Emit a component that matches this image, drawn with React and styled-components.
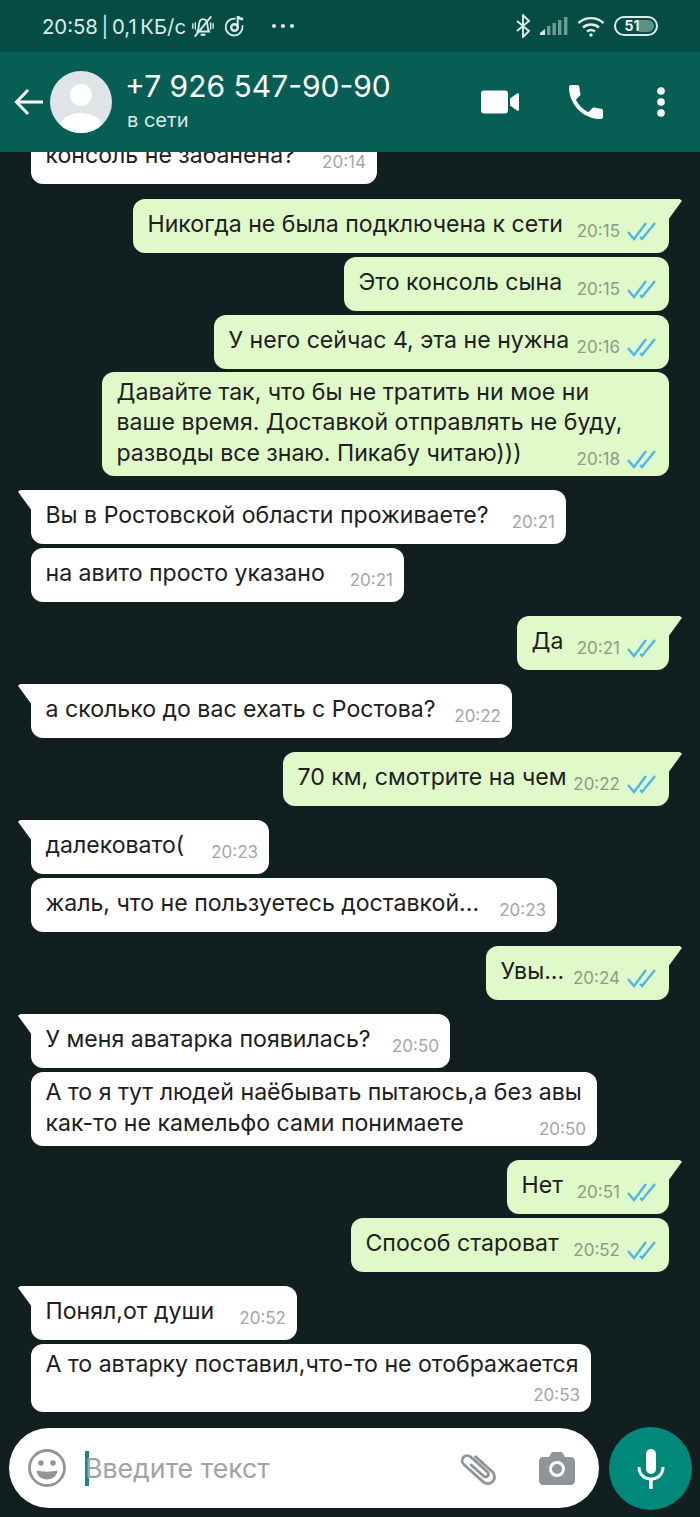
import React from "react";
import styled, { createGlobalStyle } from "styled-components";

const Global = createGlobalStyle`
  html, body { margin: 0; padding: 0; background: #111f20; }
  * { box-sizing: border-box; }
`;

const FONT = `Inter, Roboto, "Noto Sans", "Liberation Sans", sans-serif`;

const Phone = styled.div`
  width: 700px;
  height: 1517px;
  display: flex;
  flex-direction: column;
  overflow: hidden;
  background: #111f20;
  font-family: ${FONT};
`;

const StatusBar = styled.div`
  height: 52px;
  flex: none;
  background: #054d44;
  color: #dcebe7;
  display: flex;
  align-items: center;
  padding: 0 42px 0 42px;
  font-size: 20.3px;
`;
const StatusText = styled.span`
  white-space: nowrap;
  word-spacing: -2px;
`;
const StatusGap = styled.div`
  flex: 1;
`;
const StatusIcons = styled.div`
  display: flex;
  align-items: center;
  gap: ${(p) => p.$gap || 10}px;
  margin-left: ${(p) => p.$ml || 0}px;
`;
const BatteryBox = styled.div`
  width: 44px;
  height: 20px;
  border: 2px solid #dcebe7;
  border-radius: 10px;
  padding: 2px;
  display: flex;
`;
const BatteryFill = styled.div`
  width: 100%;
  border-radius: 7px;
  background: linear-gradient(90deg, transparent 0 58%, #5d8f86 58% 100%);
  color: #f2f7f5;
  font-size: 14px;
  font-weight: 700;
  line-height: 12px;
  text-align: center;
  padding-right: 8px;
`;

const Header = styled.div`
  height: 100px;
  flex: none;
  background: #075e54;
  color: #fff;
  display: flex;
  align-items: center;
  padding: 0 35px 0 14px;
`;
const Avatar = styled.div`
  width: 62px;
  height: 62px;
  margin-left: 7px;
  flex: none;
`;
const Contact = styled.div`
  margin-left: 15px;
  flex: 1;
  display: flex;
  flex-direction: column;
  margin-top: -4px;
`;
const ContactName = styled.div`
  font-size: 30px;
  line-height: 36px;
  white-space: nowrap;
  margin-left: -2px;
`;
const ContactState = styled.div`
  font-size: 20px;
  line-height: 26px;
  margin-top: 3px;
  color: #dbeae6;
`;
const HeaderActions = styled.div`
  display: flex;
  align-items: center;
`;

const Chat = styled.div`
  flex: 1;
  min-height: 0;
  overflow: hidden;
  display: flex;
  flex-direction: column;
  justify-content: flex-end;
  padding: 0 31px 15px;
`;

const Bubble = styled.div`
  position: relative;
  align-self: ${(p) => (p.$out ? "flex-end" : "flex-start")};
  flex: none;
  width: ${(p) => p.$w}px;
  margin-top: ${(p) => p.$gap ?? (p.$tail ? 14 : 4)}px;
  background: ${(p) => (p.$out ? "#e0f9c9" : "#ffffff")};
  color: #1c2021;
  border-radius: ${(p) => (p.$tail ? (p.$out ? "12px 0 12px 12px" : "0 12px 12px 12px") : "12px")};
  padding-top: ${(p) => p.$top}px;
  padding-right: ${(p) => (p.$out ? 13 : 11)}px;
  padding-bottom: ${(p) => (p.$multi ? 7 : 12.5)}px;
  padding-left: 14.5px;
  font-size: 23.1px;
  line-height: 30.5px;
  &::before {
    content: "";
    display: ${(p) => (p.$tail ? "block" : "none")};
    position: absolute;
    top: 0;
    width: 14px;
    height: 21px;
    background: inherit;
    ${(p) =>
      p.$out
        ? "right: -13px; clip-path: polygon(0 0, 84% 0, 100% 8%, 0 100%);"
        : "left: -13px; clip-path: polygon(100% 0, 16% 0, 0 8%, 100% 100%);"}
  }
`;
const Line = styled.div`
  white-space: pre;
`;
const LastRow = styled.div`
  display: flex;
  flex-direction: ${(p) => (p.$stack ? "column" : "row")};
  justify-content: space-between;
  align-items: ${(p) => (p.$stack ? "stretch" : "flex-end")};
`;
const LastLine = styled(Line)`
  padding-bottom: 1px;
`;
const Meta = styled.div`
  display: flex;
  align-items: center;
  justify-content: flex-end;
  flex: none;
  gap: 7px;
  height: 20px;
  margin-top: ${(p) => (p.$stack ? 5 : 0)}px;
  font-size: 17px;
  line-height: 20px;
  color: ${(p) => (p.$out ? "#8b9c85" : "#a3a6a7")};
`;

const Composer = styled.div`
  flex: none;
  height: 90px;
  display: flex;
  align-items: flex-start;
  padding-left: 9px;
  gap: 10px;
`;
const InputBar = styled.div`
  margin-top: 1px;
  width: 590px;
  height: 80px;
  border-radius: 40px;
  background: #fff;
  display: flex;
  align-items: center;
  padding: 0 24px 0 19px;
`;
const Caret = styled.div`
  width: 4px;
  height: 35px;
  background: #128c7e;
  margin-left: 19px;
  flex: none;
`;
const Placeholder = styled.div`
  flex: 1;
  font-size: 26.7px;
  color: #a0a4a6;
  margin-left: -4px;
  white-space: nowrap;
`;
const MicButton = styled.div`
  width: 83px;
  height: 83px;
  border-radius: 50%;
  background: #00897b;
  display: flex;
  align-items: center;
  justify-content: center;
  flex: none;
`;
const Icon = styled.svg`
  display: block;
  flex: none;
  margin-left: ${(p) => p.$ml || 0}px;
`;

const Ticks = () => (
  <Icon width="29" height="20" viewBox="0 0 29 20" fill="none" stroke="#4fb6ec" strokeWidth="2.4">
    <path d="M1 11l6 7L19 2" />
    <path d="M13 16l2 2L28 2" />
  </Icon>
);

const MESSAGES = [
  { w: 346, text: "консоль не забанена?", time: "20:14" },
  { w: 536, gap: 15, out: 1, tail: 1, text: "Никогда не была подключена к сети", time: "20:15" },
  { w: 325, out: 1, text: "Это консоль сына", time: "20:15" },
  { w: 455, out: 1, text: "У него сейчас 4, эта не нужна", time: "20:16" },
  {
    w: 567,
    gap: 3,
    out: 1,
    text: "Давайте так, что бы не тратить ни мое ни\nваше время. Доставкой отправлять не буду,\nразводы все знаю. Пикабу читаю)))",
    time: "20:18",
  },
  { w: 535, tail: 1, text: "Вы в Ростовской области проживаете?", time: "20:21" },
  { w: 373, text: "на авито просто указано", time: "20:21" },
  { w: 152, out: 1, tail: 1, text: "Да", time: "20:21" },
  { w: 481, tail: 1, text: "а сколько до вас ехать с Ростова?", time: "20:22" },
  { w: 386, out: 1, tail: 1, text: "70 км, смотрите на чем", time: "20:22" },
  { w: 238, tail: 1, text: "далековато(", time: "20:23" },
  { w: 526, text: "жаль, что не пользуетесь доставкой...", time: "20:23" },
  { w: 183, out: 1, tail: 1, text: "Увы...", time: "20:24" },
  { w: 419, tail: 1, text: "У меня аватарка появилась?", time: "20:50" },
  {
    w: 566,
    text: "А то я тут людей наёбывать пытаюсь,а без авы\nкак-то не камельфо сами понимаете",
    time: "20:50",
  },
  { w: 162, out: 1, tail: 1, text: "Нет", time: "20:51" },
  { w: 318, out: 1, text: "Способ староват", time: "20:52" },
  { w: 266, tail: 1, text: "Понял,от души", time: "20:52" },
  { w: 560, stack: 1, text: "А то автарку поставил,что-то не отображается", time: "20:53" },
];

const TOP_BY_EXTRA_LINES = { 0: 10, 1: 5, 2: 4.5 };

const Message = ({ m }) => {
  const lines = m.text.split("\n");
  const last = lines.pop();
  const multi = Boolean(m.stack) || lines.length > 0;
  return (
    <Bubble
      $w={m.w}
      $gap={m.gap}
      $out={m.out}
      $tail={m.tail}
      $multi={multi}
      $top={m.stack ? 4.5 : TOP_BY_EXTRA_LINES[lines.length]}
    >
      {lines.map((l, i) => (
        <Line key={i}>{l}</Line>
      ))}
      <LastRow $stack={m.stack}>
        <LastLine>{last}</LastLine>
        <Meta $out={m.out} $stack={m.stack}>
          <span>{m.time}</span>
          {m.out ? <Ticks /> : null}
        </Meta>
      </LastRow>
    </Bubble>
  );
};

export default function App() {
  return (
    <Phone>
      <Global />
      <StatusBar>
        <StatusText>20:58 | 0,1 КБ/с</StatusText>
        <StatusIcons $ml={5} $gap={10}>
          <Icon width="24" height="24" viewBox="0 0 26 26" fill="none" stroke="#dcebe7" strokeWidth="2">
            <path d="M7 19c1.200-2 1.300-3.500 1.500-6.500C8.700 8.500 10 5.500 13 5.500s4.600 2.500 4.800 6c.2 3.500.6 5.500 1.700 7.500z" />
            <path d="M10.500 22.500h5" strokeWidth="2.400" />
            <path d="M4 24.500L22 2.500" />
            <path d="M2 10v6M4.700 9v8M24 10v6M21.300 9v8" strokeWidth="1.500" />
          </Icon>
          <Icon width="20" height="24" viewBox="0 0 20 24" fill="none" stroke="#dcebe7" strokeWidth="1.800">
            <path d="M10.500 4.800a8.400 8.400 0 1 0 6.800 6.500" />
            <circle cx="9.500" cy="13.500" r="3.300" strokeWidth="2.400" />
            <path d="M12.700 2v11" strokeWidth="2" />
            <path d="M12.700 2.500c1 1.600 3 2.500 5.500 2.500" strokeWidth="2.600" />
          </Icon>
          <Icon $ml={16} width="24" height="6" viewBox="0 0 24 6" fill="#dcebe7">
            <circle cx="3" cy="3" r="2.100" />
            <circle cx="12" cy="3" r="2.100" />
            <circle cx="21" cy="3" r="2.100" />
          </Icon>
        </StatusIcons>
        <StatusGap />
        <StatusIcons $gap={9}>
          <Icon width="16" height="24" viewBox="0 0 16 24" fill="none" stroke="#dcebe7" strokeWidth="1.900">
            <path d="M2 7l12 10-6 6V1l6 6L2 17" />
          </Icon>
          <Icon width="28" height="20" viewBox="0 0 28 20" fill="#6f9c93">
            <path d="M0 17l5-4v6H0z" fill="#dcebe7" />
            <rect x="7" y="10" width="3.400" height="9" />
            <rect x="12.500" y="7" width="3.400" height="12" />
            <rect x="18" y="4" width="3.400" height="15" />
            <rect x="24" y="1" width="3.400" height="18" />
          </Icon>
          <Icon width="28" height="22" viewBox="0 0 28 22" fill="none" stroke="#dcebe7" strokeWidth="2.400">
            <path d="M1.500 8c7-6.500 18-6.500 25 0" />
            <path d="M6 12.500c4.500-4 11.500-4 16 0" />
            <path d="M10 16.500c2.500-2 5.500-2 8 0" />
            <circle cx="14" cy="20" r="1.700" fill="#dcebe7" stroke="none" />
          </Icon>
          <BatteryBox>
            <BatteryFill>51</BatteryFill>
          </BatteryBox>
        </StatusIcons>
      </StatusBar>

      <Header>
        <Icon width="29" height="28" viewBox="0 0 29 28" fill="none" stroke="#fff" strokeWidth="3">
          <path d="M29 14H3M14 2L2.500 14 14 26" />
        </Icon>
        <Avatar>
          <Icon width="62" height="62" viewBox="0 0 62 62">
            <defs>
              <clipPath id="avatarClip">
                <circle cx="31" cy="31" r="31" />
              </clipPath>
            </defs>
            <circle cx="31" cy="31" r="31" fill="#dfe5e7" />
            <g clipPath="url(#avatarClip)" fill="#fff">
              <circle cx="31" cy="24" r="11" />
              <ellipse cx="31" cy="57" rx="22" ry="15" />
            </g>
          </Icon>
        </Avatar>
        <Contact>
          <ContactName>+7 926 547-90-90</ContactName>
          <ContactState>в сети</ContactState>
        </Contact>
        <HeaderActions>
          <Icon width="38" height="24" viewBox="0 0 38 24" fill="#fff">
            <rect x="0" y="0.500" width="27" height="23" rx="3" />
            <path d="M29 8.500l7-5c1-.6 2 0 2 1v15c0 1-1 1.600-2 1l-7-5z" />
          </Icon>
          <Icon $ml={50} width="34" height="34" viewBox="3 3 18 18" fill="#fff">
            <path d="M6.620 10.790c1.440 2.830 3.760 5.140 6.590 6.590l2.200-2.200c.27-.27.67-.36 1.020-.24 1.120.37 2.330.57 3.570.57.55 0 1 .45 1 1V20c0 .55-.45 1-1 1-9.390 0-17-7.610-17-17 0-.55.45-1 1-1h3.500c.55 0 1 .45 1 1 0 1.250.2 2.450.57 3.570.11.35.03.74-.25 1.020l-2.200 2.200z" />
          </Icon>
          <Icon $ml={54} width="8" height="30" viewBox="0 0 8 30" fill="#fff">
            <circle cx="4" cy="4" r="3.800" />
            <circle cx="4" cy="15" r="3.800" />
            <circle cx="4" cy="26" r="3.800" />
          </Icon>
        </HeaderActions>
      </Header>

      <Chat>
        {MESSAGES.map((m, i) => (
          <Message key={i} m={m} />
        ))}
      </Chat>

      <Composer>
        <InputBar>
          <Icon width="38" height="38" viewBox="0 0 38 38" fill="none" stroke="#8f9599" strokeWidth="2.800">
            <circle cx="19" cy="19" r="17.500" />
            <circle cx="13" cy="14" r="2.800" fill="#8f9599" stroke="none" />
            <circle cx="25" cy="14" r="2.800" fill="#8f9599" stroke="none" />
            <path d="M8.500 21.500c6 1.500 15 1.500 21 0-.5 5.500-5 9-10.500 9s-10-3.500-10.500-9z" fill="#8f9599" stroke="none" />
          </Icon>
          <Caret />
          <Placeholder>Введите текст</Placeholder>
          <Icon width="43" height="43" viewBox="0 0 38 38" fill="none" stroke="#8f9599" strokeWidth="2.500" strokeLinecap="round">
            <g transform="rotate(-48 19 19)">
              <path d="M25 10V30a6 6 0 0 1-12 0V7a4.500 4.500 0 0 1 9 0V27a2.500 2.500 0 0 1-5 0V12" />
            </g>
          </Icon>
          <Icon $ml={39} width="36" height="34" viewBox="0 0 36 34" fill="#8f9599">
            <path d="M4 6h6l2-3.500c.6-1 1.500-1.500 2.500-1.500h7c1 0 1.900.5 2.500 1.500L26 6h6c2.200 0 4 1.800 4 4v20c0 2.200-1.800 4-4 4H4c-2.200 0-4-1.800-4-4V10c0-2.200 1.800-4 4-4z" />
            <circle cx="18" cy="18" r="6.500" fill="none" stroke="#fff" strokeWidth="3" />
          </Icon>
        </InputBar>
        <MicButton>
          <Icon width="28" height="42" viewBox="0 0 28 42" fill="none" stroke="#fff">
            <rect x="9" y="1" width="10" height="25" rx="5" fill="#fff" stroke="none" />
            <path d="M2 19c0 7 5 12 12 12s12-5 12-12" strokeWidth="3" />
            <path d="M14 30v11" strokeWidth="3.500" />
          </Icon>
        </MicButton>
      </Composer>
    </Phone>
  );
}
